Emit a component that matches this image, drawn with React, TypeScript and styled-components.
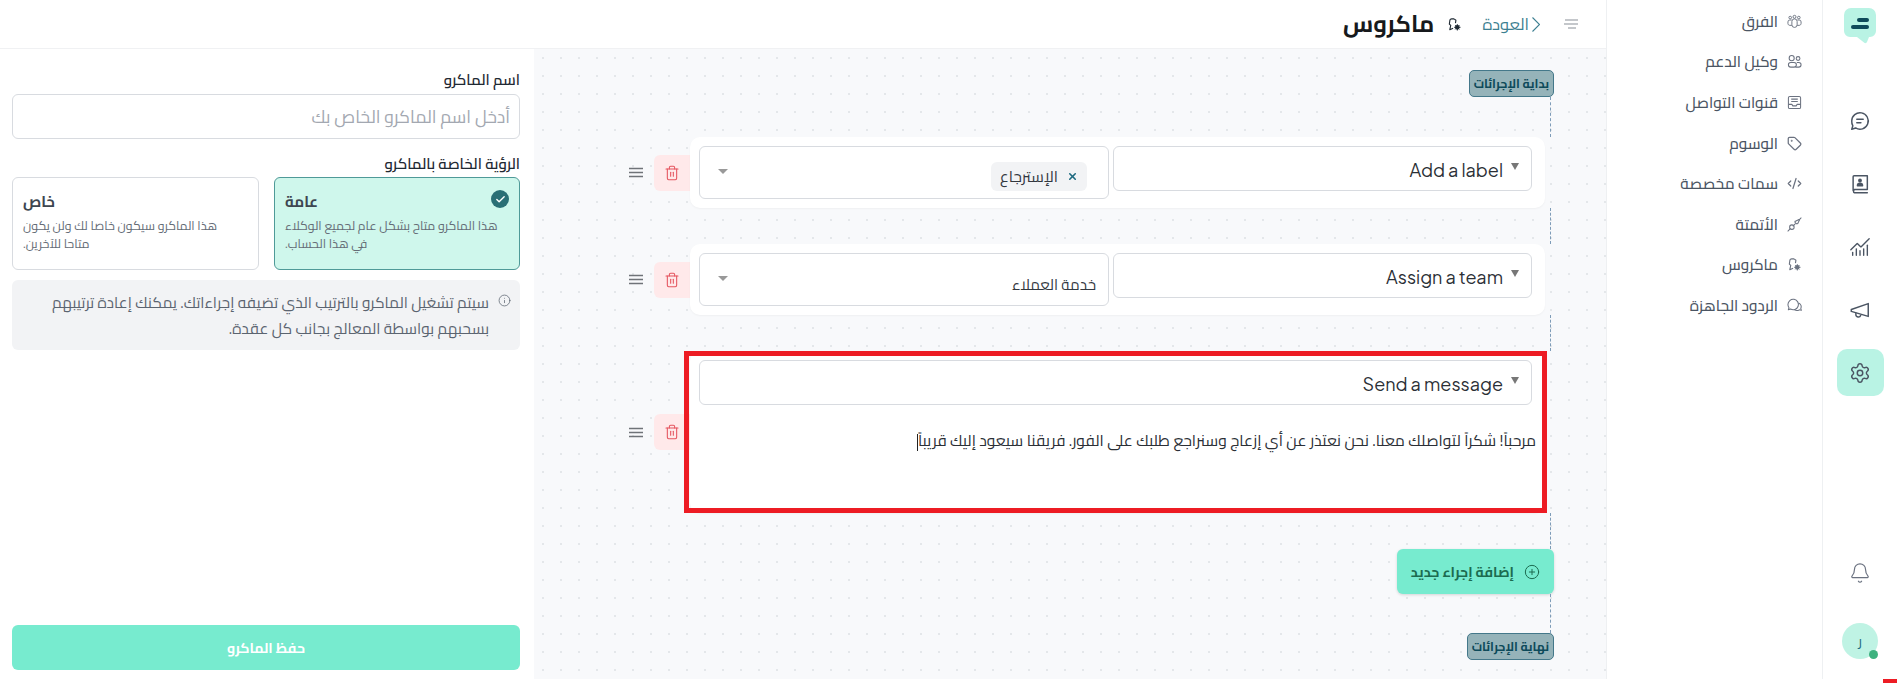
import React from 'react';
import styled, { createGlobalStyle } from 'styled-components';
import { Bell, Settings, ChartNoAxesCombined, Tag, CodeXml, CirclePlus, Info, Check, X, Trash2 } from 'lucide-react';

const Global = createGlobalStyle`
  html, body { margin: 0; padding: 0; background: #fff; height: 683px; overflow: hidden; }
  body { font-family: "Cairo", "Noto Sans Arabic", "DejaVu Sans", sans-serif; color: #1f2933; }
  * { box-sizing: border-box; }
`;

const Page = styled.div`
  display: flex; height: 679px; width: 1897px; position: relative; background: #fff;
`;
const Rail = styled.aside`
  width: 75px; flex: none; border-left: 1px solid #eef0f2; display: flex; flex-direction: column;
  align-items: center; padding-top: 8px;
`;
const Logo = styled.svg`width: 32px; height: 36px; margin-bottom: 53px; display: block;`;
const RailBtn = styled.div<{ $active?: boolean }>`
  width: 47px; height: 47px; border-radius: 10px; display: flex; align-items: center; justify-content: center;
  margin-bottom: 16px; color: #4b5563; background: ${p => p.$active ? '#b9f3e4' : 'transparent'};
`;
const RailSpacer = styled.div`flex: 1;`;
const Avatar = styled.div`
  width: 36px; height: 36px; border-radius: 50%; background: #bff3e4; color: #1e6a80; position: relative;
  display: flex; align-items: center; justify-content: center; font-size: 14px; margin: 39px 0 20px;
  &::after { content: ''; position: absolute; right: 0; bottom: 0; width: 9px; height: 9px; border-radius: 50%; background: #3fb27f; }
`;
const SideNav = styled.nav`
  width: 216px; flex: none; border-left: 1px solid #eef0f2; padding: 1px 20px 0 0;
`;
const NavItem = styled.div`
  height: 40.6px; display: flex; align-items: center; gap: 9px; font-size: 15.3px; font-weight: 500; color: #4b5563;
  & svg { flex: none; width: 15px; height: 15px; color: #6b7280; }
`;
const Main = styled.div`
  flex: 1; min-width: 0; display: flex; flex-direction: column;
`;
const Header = styled.header`
  height: 49px; flex: none; border-bottom: 1px solid #f0f1f3; display: flex; align-items: center; padding: 0 28px 0 0;
`;
const HeaderMenu = styled.svg`width: 14px; height: 10px; color: #8a9097; margin-left: 24px; flex: none;`;
const Back = styled.div`
  display: flex; align-items: center; gap: 3px; color: #3d7f91; font-size: 16.5px; margin-left: 20px; line-height: 1;
`;
const BackChevron = styled.svg`width: 8px; height: 15px; flex: none;`;
const Title = styled.h1`margin: 0 13px 0 0; font-size: 23.5px; font-weight: 700; color: #17191c; line-height: 1;`;
const Body = styled.div`flex: 1; display: flex; min-height: 0;`;
const Canvas = styled.section`
  flex: 1; min-width: 0; background-color: #f8f9fb;
  background-image: radial-gradient(circle at center, #e4e7ea 1px, transparent 1.2px);
  background-size: 18px 18px; padding: 21px 52px 0 0; display: flex; flex-direction: column; align-items: flex-start;
`;
const FlowTag = styled.div`
  height: 27px; padding: 0 4px; display: flex; align-items: center; background: #95b3b9; border: 1px solid #44788a;
  border-radius: 5px; color: #0d4a5a; font-size: 12.3px; font-weight: 700; white-space: nowrap;
`;
const Connector = styled.div<{ $h: number }>`
  height: ${p => p.$h}px; margin-right: 3px; border-right: 1px dashed #7e9cb8;
`;
const ActionRow = styled.div`
  margin-right: 9px; display: flex; align-items: center; position: relative;
`;
const Card = styled.div<{ $marked?: boolean }>`
  width: 855px; background: #fff; border-radius: 10px; padding: 9px 13px 9px 9px; box-shadow: 0 1px 2px rgba(0,0,0,.04);
  position: relative; ${p => p.$marked && 'height: 162px;'}
`;
const Marker = styled.div`
  position: absolute; inset: 0 -2px 0 -6px; border: 5px solid #ed1c24; pointer-events: none;
`;
const Selects = styled.div`display: flex; gap: 4px; align-items: flex-start;`;
const Select = styled.div<{ $w?: number; $h?: number }>`
  width: ${p => p.$w ? p.$w + 'px' : '100%'}; height: ${p => p.$h || 45}px; flex: none; background: #fff;
  border: 1px solid #d8dbe0; border-radius: 6px; display: flex; align-items: center; padding: 0 12px 0 10px; position: relative;
`;
const Caret = styled.span`
  width: 0; height: 0; border-left: 4.5px solid transparent; border-right: 4.5px solid transparent; border-top: 7px solid #777;
  flex: none; margin-top: -4px;
`;
const ActionName = styled.span`
  font-family: "Plus Jakarta Sans", "Inter", sans-serif; font-size: 18px; color: #2b2f36; margin: 1px 8px 0 0;
`;
const ValueCaret = styled(Caret)`
  margin-right: auto; margin-left: 8px; margin-top: -3px; border-left-width: 5px; border-right-width: 5px; border-top: 5.5px solid #999;
`;
const Chip = styled.div`
  height: 29px; display: flex; align-items: center; gap: 9px; padding: 0 9px; border-radius: 6px; background: #f2f3f5;
  font-size: 15.5px; color: #33383f; margin: 7px 9px 0 0;
  & svg { color: #1e6a80; flex: none; }
`;
const Value = styled.span`font-size: 15px; color: #33383f; margin-top: 10px;`;
const Message = styled.div`
  font-size: 15.6px; color: #2b2f36; padding: 21px 0 0 0; margin-right: -4px; white-space: nowrap;
  & i { display: inline-block; width: 1px; height: 17px; background: #222; vertical-align: middle; }
`;
const DeleteBtn = styled.div`
  width: 36px; height: 36px; background: #ffe9ea; border-radius: 6px 0 0 6px; color: #e5555f; display: flex; align-items: center; justify-content: center; flex: none;
`;
const Handle = styled.svg`width: 14px; height: 11px; color: #6f7378; margin-right: 11px; flex: none;`;
const AddBtn = styled.div`
  height: 45px; width: 157px; background: #77ebcf; border-radius: 6px; display: flex; align-items: center; gap: 10px; padding: 0 14px;
  color: #1c6b50; font-size: 14px; font-weight: 700; box-shadow: 0 1px 3px rgba(0,0,0,.15); white-space: nowrap;
  & svg { flex: none; }
`;
const Panel = styled.aside`
  width: 534px; flex: none; padding: 21px 14px 9px 12px; display: flex; flex-direction: column; background: #fff;
`;
const Label = styled.div`font-size: 15px; font-weight: 600; color: #1f2933; line-height: 20px;`;
const NameInput = styled.input`
  height: 45px; margin: 4px 0 15px; width: 100%; border: 1px solid #d8dbe0; border-radius: 6px; padding: 0 9px;
  font: inherit; font-size: 17.5px; outline: none; direction: rtl;
  &::placeholder { color: #a3a8b1; }
`;
const Cards = styled.div`display: grid; grid-template-columns: 246px 247px; gap: 15px; margin: 3px 0 10px;`;
const Vis = styled.div<{ $on?: boolean }>`
  height: 93px; border-radius: 6px; padding: 14px 10px 0; position: relative; text-align: left;
  border: 1px solid ${p => p.$on ? '#4f9a98' : '#d8dbe0'}; background: ${p => p.$on ? '#cff7ec' : '#fff'};
`;
const VisCheck = styled.div`
  position: absolute; top: 12px; right: 10px; width: 18px; height: 18px; border-radius: 50%; background: #2a6f75; color: #fff;
  display: flex; align-items: center; justify-content: center;
`;
const VisTitle = styled.div`font-size: 15px; font-weight: 700; color: #3d4650; line-height: 20px;`;
const VisDesc = styled.div`font-size: 12.4px; color: #646c76; line-height: 18px; margin-top: 5px;`;
const Note = styled.div`
  height: 70px; background: #f2f3f5; border-radius: 6px; display: flex; gap: 9px; padding: 10px 9px 0 0; font-size: 15.4px; line-height: 26px; color: #5b6470;
  & svg { flex: none; margin-top: 4px; }
`;
const Save = styled.div`
  margin-top: auto; height: 45px; background: #77ebcf; border-radius: 6px; color: #fff; font-size: 14px; font-weight: 700;
  display: flex; align-items: center; justify-content: center;
`;
const Corner = styled.div`position: absolute; right: 0; top: 679px; width: 14px; height: 4px; background: #ed1c24;`;

const IconS = ({ children, size = 22, w = 1.6 }: { children: React.ReactNode; size?: number; w?: number }) => (
  <svg width={size} height={size} viewBox="0 0 24 24" fill="none" stroke="currentColor" strokeWidth={w} strokeLinecap="round" strokeLinejoin="round">{children}</svg>
);

const MacroIcon = ({ size = 15 }: { size?: number }) => (
  <svg width={size} height={size} viewBox="0 0 16 16" fill="none" stroke="currentColor" strokeWidth="1.2" strokeLinejoin="round">
    <path d="M7.5 2 H5 A2 2 0 0 0 3 4 L2.5 7.5 L4 9 L3 13.5 L6.5 12" />
    <path d="M7.5 2 L9.5 3.5 L9 6.5" />
    <circle cx="11" cy="11" r="1.9" fill="currentColor" />
    <path d="M11 7.6v6.8M7.6 11h6.8M8.8 8.8l4.4 4.4M13.2 8.8l-4.4 4.4" strokeWidth="1" />
  </svg>
);

const ChatIcon = () => (
  <IconS><path d="M3 12a9 9 0 1 1 4.2 7.6L3 21l1.2-3.8A9 9 0 0 1 3 12Z" /><path d="M8.5 10h7M8.5 14h4.5" /></IconS>
);
const BookIcon = () => (
  <IconS>
    <path d="M4.5 19V4a1 1 0 0 1 1-1H20v15H6a2 2 0 0 0 0 3.6h14" />
    <circle cx="12" cy="8.2" r="1.3" fill="currentColor" />
    <path d="M9.2 14a2.8 2.8 0 0 1 5.6 0Z" fill="currentColor" />
  </IconS>
);
const HornIcon = () => (
  <IconS><path d="M2.5 11.5 21 5v14L2.5 13.5Z" /><path d="M7.5 15.5v1.7a2.4 2.4 0 0 0 2.4 2.4h.5a2.4 2.4 0 0 0 2.3-1.6" /></IconS>
);
const TeamIcon = () => (
  <svg viewBox="0 0 16 16" fill="none" stroke="currentColor" strokeWidth="1">
    <circle cx="8" cy="3" r="1.6" /><circle cx="3.4" cy="3.8" r="1.4" /><circle cx="12.6" cy="3.8" r="1.4" />
    <path d="M5.2 8a2.8 2.8 0 0 1 5.6 0v3.5a2.8 2.8 0 0 1-5.6 0Z" />
    <path d="M5 6.4H3A2 2 0 0 0 1 8.4v1.8c0 1 .9 1.9 2 1.9h2.2M11 6.4h2a2 2 0 0 1 2 2v1.8c0 1-.9 1.9-2 1.9h-2.2" />
  </svg>
);
const AgentIcon = () => (
  <svg viewBox="0 0 16 16" fill="none" stroke="currentColor" strokeWidth="1.1">
    <circle cx="5" cy="4.4" r="2.7" /><circle cx="11.8" cy="4.8" r="2" />
    <rect x="1.5" y="9" width="8.5" height="5" rx="2.5" /><path d="M10.5 9H12.5a2.5 2.5 0 0 1 0 5H9" />
  </svg>
);
const InboxIcon = () => (
  <svg viewBox="0 0 16 16" fill="none" stroke="currentColor" strokeWidth="1.1" strokeLinejoin="round">
    <rect x="1.5" y="1.5" width="13" height="13" rx="1.5" />
    <path d="M1.5 10h3.7l1 1.6h3.6l1-1.6h3.7M4.5 4.4h7M4.5 7h7" />
  </svg>
);
const PlugIcon = () => (
  <svg viewBox="0 0 16 16" fill="none" stroke="currentColor" strokeWidth="1.1" strokeLinejoin="round" strokeLinecap="round">
    <path d="M1 15l2.5-2.5M13 3 15 1M6.5 9.5l2-2" />
    <circle cx="5.2" cy="10.8" r="2.4" />
    <path d="M9 4.5 12.8 2.6 13.4 3 11.5 7a2.2 2.2 0 0 1-3-2.5Z" />
  </svg>
);
const BubblesIcon = () => (
  <svg viewBox="0 0 16 16" fill="none" stroke="currentColor" strokeWidth="1.1" strokeLinejoin="round">
    <path d="M1 7a5.6 5.6 0 1 1 2.8 4.8L1.4 12.6l.7-2.2A5.5 5.5 0 0 1 1 7Z" />
    <path d="M12.3 5.4a4 4 0 0 1 2.4 5.6l.6 2.2-2.2-.6a4.5 4.5 0 0 1-5.2-.2" />
  </svg>
);

const nav: [React.ReactNode, string][] = [
  [<TeamIcon />, 'الفرق'],
  [<AgentIcon />, 'وكيل الدعم'],
  [<InboxIcon />, 'قنوات التواصل'],
  [<Tag />, 'الوسوم'],
  [<CodeXml />, 'سمات مخصصة'],
  [<PlugIcon />, 'الأتمتة'],
  [<MacroIcon />, 'ماكروس'],
  [<BubblesIcon />, 'الردود الجاهزة'],
];

const Row = ({ children, marked }: { children: React.ReactNode; marked?: boolean }) => (
  <ActionRow>
    <Card $marked={marked}>{children}{marked && <Marker />}</Card>
    <DeleteBtn><Trash2 size={16} strokeWidth={1.6} /></DeleteBtn>
    <Handle viewBox="0 0 14 11" fill="none" stroke="currentColor" strokeWidth="1.6"><path d="M0 1.5h14M0 5.5h14M0 9.5h14" /></Handle>
  </ActionRow>
);

export default function App() {
  return (
    <div dir="rtl">
      <Global />
      <Page>
        <Rail>
          <Logo viewBox="0 0 32 36">
            <path d="M7 0h18a7 7 0 0 1 7 7v16a6 6 0 0 1-6 6h-1l-2 5c-.6 1.4-2 1.4-3 .6L13 29H6a6 6 0 0 1-6-6V7a7 7 0 0 1 7-7Z" fill="#b9f3e4" />
            <rect x="13" y="10" width="12" height="4" rx="2" fill="#0f4a5a" />
            <rect x="7" y="17" width="18" height="4" rx="2" fill="#0f4a5a" />
          </Logo>
          <RailBtn><ChatIcon /></RailBtn>
          <RailBtn><BookIcon /></RailBtn>
          <RailBtn><ChartNoAxesCombined size={22} strokeWidth={1.5} /></RailBtn>
          <RailBtn><HornIcon /></RailBtn>
          <RailBtn $active><Settings size={22} strokeWidth={1.6} /></RailBtn>
          <RailSpacer />
          <Bell size={22} strokeWidth={1.3} color="#6b7280" />
          <Avatar>ر</Avatar>
        </Rail>
        <SideNav>
          {nav.map(([icon, label]) => <NavItem key={label}>{icon}<span>{label}</span></NavItem>)}
        </SideNav>
        <Main>
          <Header>
            <HeaderMenu viewBox="0 0 14 10" fill="none" stroke="currentColor" strokeWidth="1.2"><path d="M1 1h13M0 5h14M4 9h8" /></HeaderMenu>
            <Back>
              <BackChevron viewBox="0 0 8 15" fill="none" stroke="currentColor" strokeWidth="1.1"><path d="M.5.5l7 7-7 7" /></BackChevron>
              <span>العودة</span>
            </Back>
            <MacroIcon />
            <Title>ماكروس</Title>
          </Header>
          <Body>
            <Canvas>
              <FlowTag>بداية الإجرائات</FlowTag>
              <Connector $h={40} />
              <Row>
                <Selects>
                  <Select $w={419}><Caret /><ActionName>Add a label</ActionName></Select>
                  <Select $w={410} $h={53}>
                    <Chip><X size={11} strokeWidth={3.5} /><span>الإسترجاع</span></Chip>
                    <ValueCaret />
                  </Select>
                </Selects>
              </Row>
              <Connector $h={36} />
              <Row>
                <Selects>
                  <Select $w={419}><Caret /><ActionName>Assign a team</ActionName></Select>
                  <Select $w={410} $h={53}>
                    <Value>خدمة العملاء</Value>
                    <ValueCaret />
                  </Select>
                </Selects>
              </Row>
              <Connector $h={36} />
              <Row marked>
                <Select><Caret /><ActionName>Send a message</ActionName></Select>
                <Message>مرحباً! شكراً لتواصلك معنا. نحن نعتذر عن أي إزعاج وسنراجع طلبك على الفور. فريقنا سيعود إليك قريباً<i /></Message>
              </Row>
              <Connector $h={36} />
              <AddBtn><CirclePlus size={16} strokeWidth={1.5} /><span>إضافة إجراء جديد</span></AddBtn>
              <Connector $h={39} />
              <FlowTag>نهاية الإجرائات</FlowTag>
            </Canvas>
            <Panel>
              <Label>اسم الماكرو</Label>
              <NameInput placeholder="أدخل اسم الماكرو الخاص بك" />
              <Label>الرؤية الخاصة بالماكرو</Label>
              <Cards>
                <Vis $on>
                  <VisCheck><Check size={11} strokeWidth={3} /></VisCheck>
                  <VisTitle>عامة</VisTitle>
                  <VisDesc>هذا الماكرو متاح بشكل عام لجميع الوكلاء<br />في هذا الحساب.</VisDesc>
                </Vis>
                <Vis>
                  <VisTitle>خاص</VisTitle>
                  <VisDesc>هذا الماكرو سيكون خاصا لك ولن يكون<br />متاحا للآخرين.</VisDesc>
                </Vis>
              </Cards>
              <Note>
                <Info size={13} strokeWidth={1.4} />
                <div>سيتم تشغيل الماكرو بالترتيب الذي تضيفه إجراءاتك. يمكنك إعادة ترتيبهم<br />بسحبهم بواسطة المعالج بجانب كل عقدة.</div>
              </Note>
              <Save>حفظ الماكرو</Save>
            </Panel>
          </Body>
        </Main>
        <Corner />
      </Page>
    </div>
  );
}
